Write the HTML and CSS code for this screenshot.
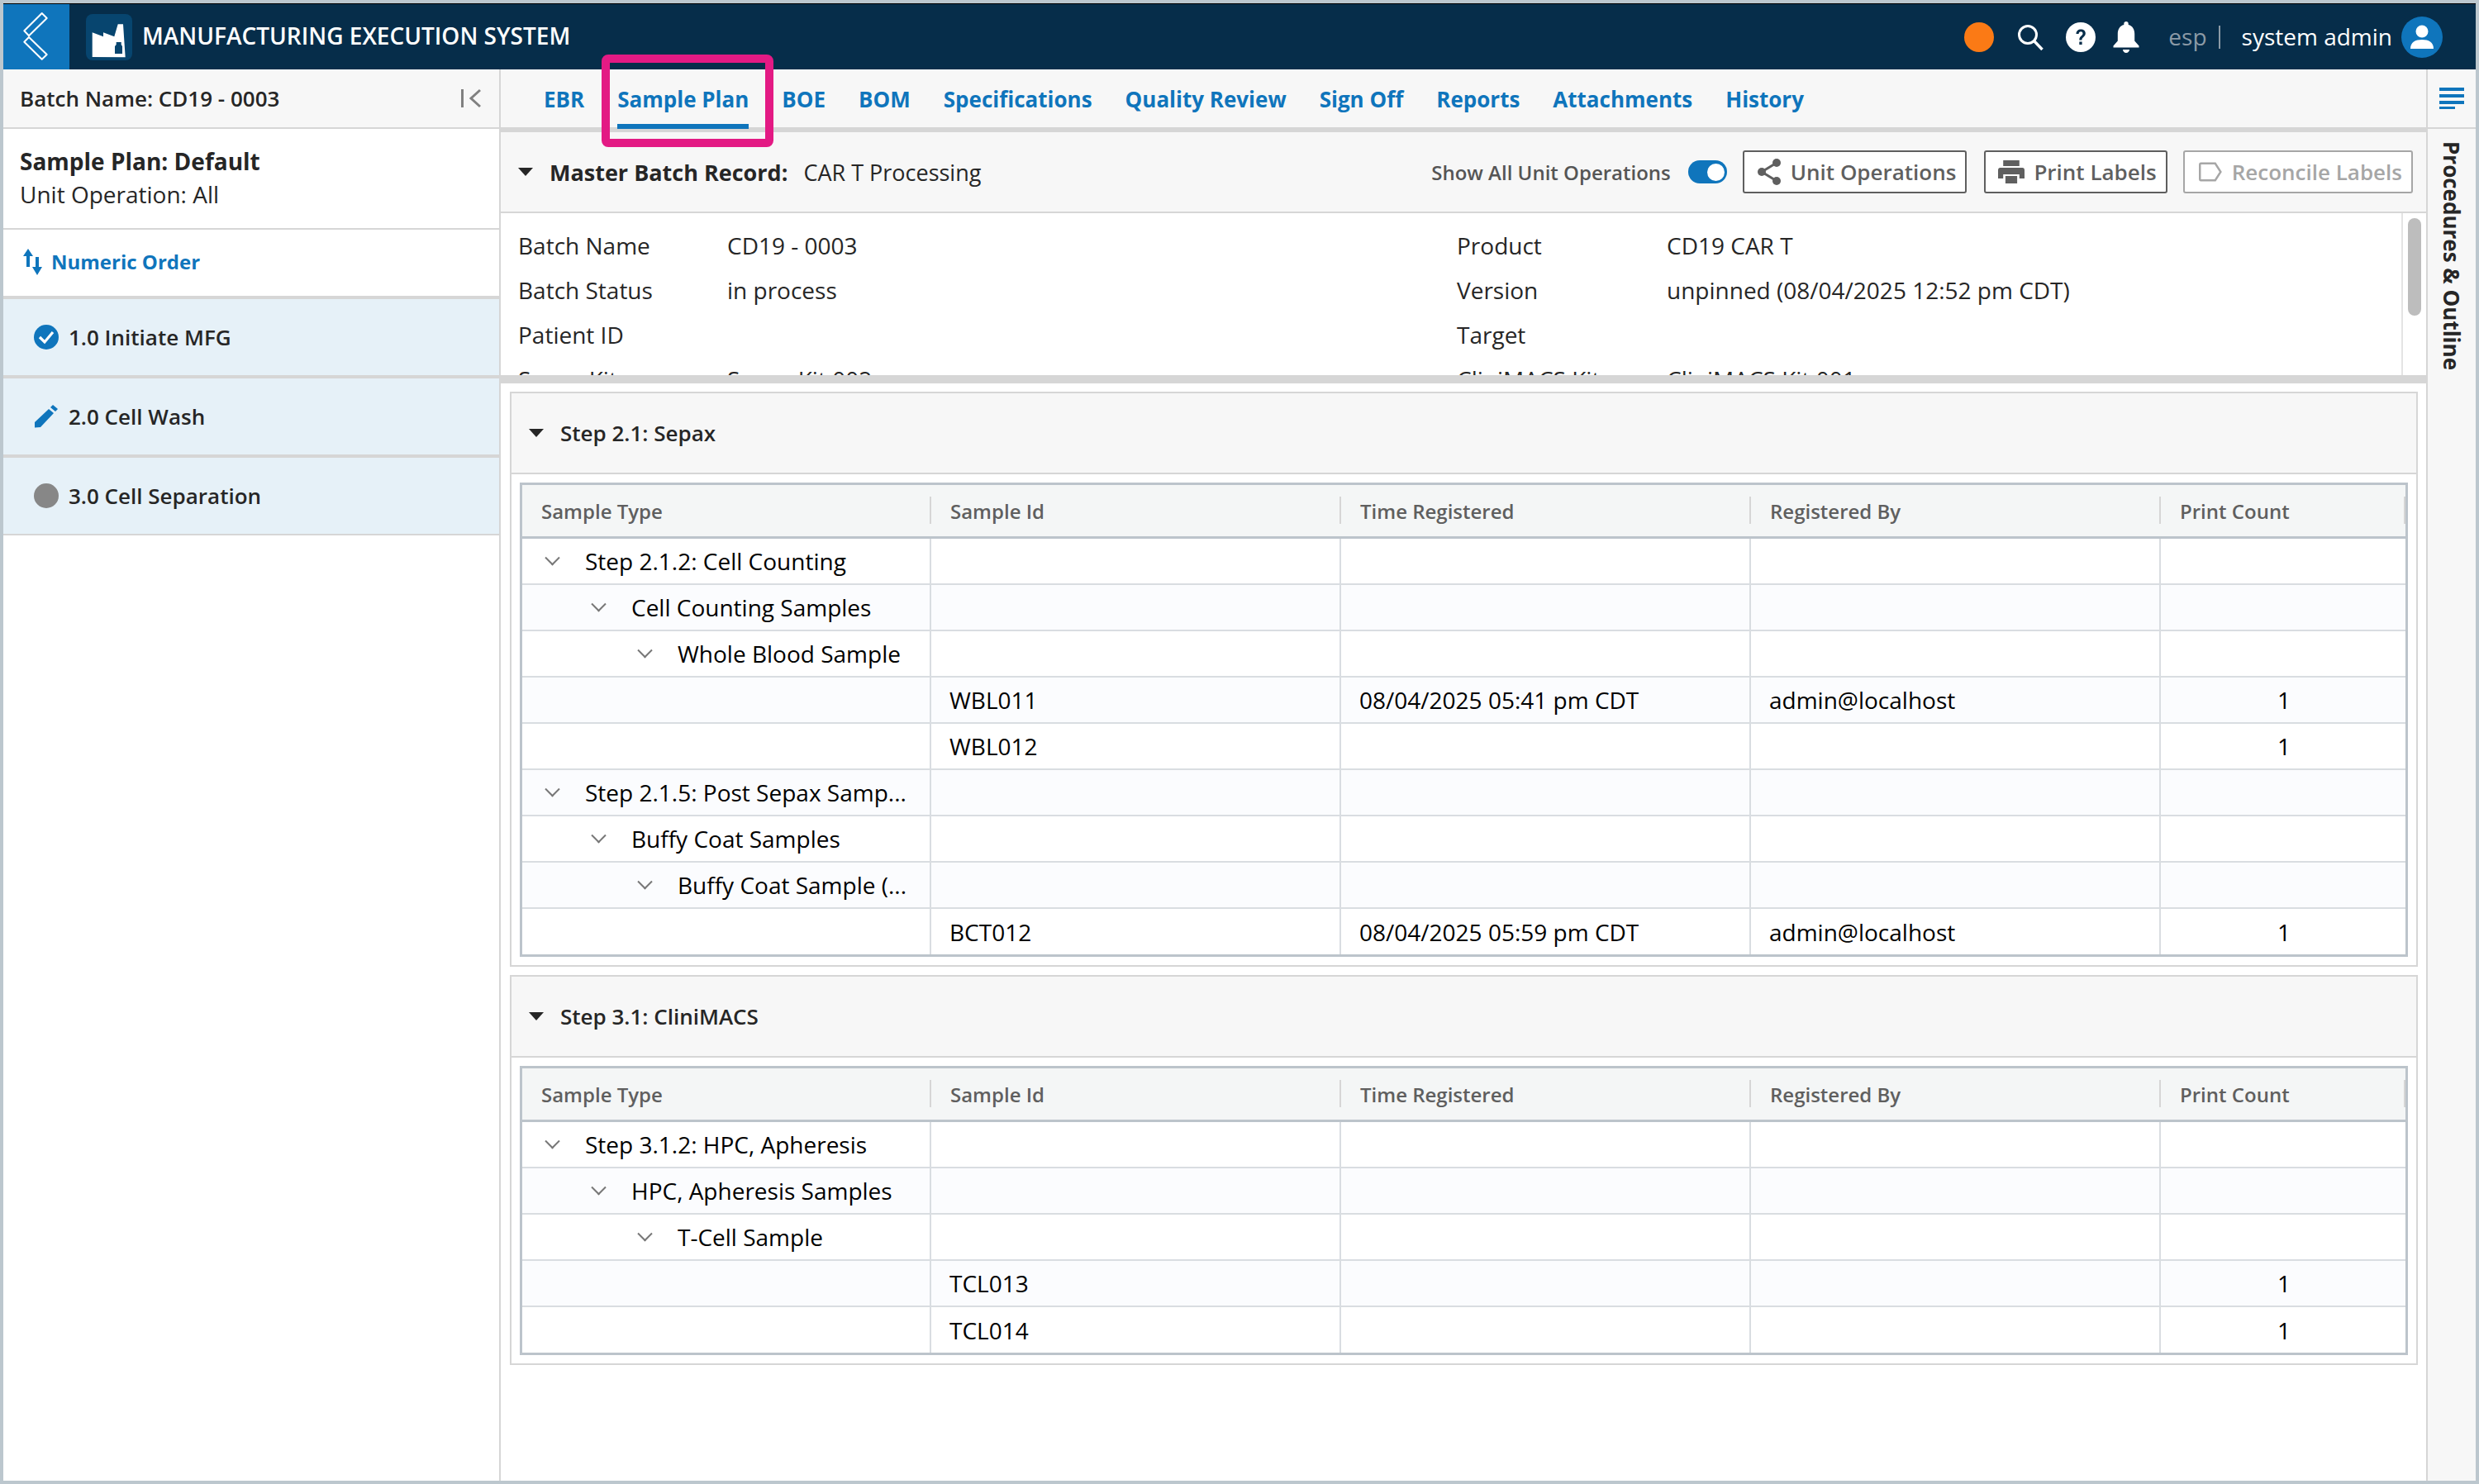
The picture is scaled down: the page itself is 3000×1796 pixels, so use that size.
FILE: index.html
```html
<!DOCTYPE html>
<html lang="en">
<head>
<meta charset="utf-8">
<title>Manufacturing Execution System</title>
<link rel="stylesheet" href="styles.css">
</head>
<body>
<div class="app">
  <header class="topbar">
    <a class="back"><svg width="80" height="79" viewBox="4 5 80 79"><path d="M29.300 37.300 L50.700 16 L56.700 22 L35 43.300 Z M29.300 50.700 L35 45 L56.700 66 L50.700 71.700 Z" fill="none" stroke="#fff" stroke-width="2" stroke-linejoin="round"/></svg></a>
    <div class="logo"><svg width="56" height="56" viewBox="0 0 56 56"><path d="M7.700 22.300 L21 27.300 V22.300 L34.300 27.300 L38.700 12.300 H45 L47.700 52.300 L7.700 52 Z" fill="#fff"/><path d="M36.700 34 h6 v3 l1.300 2 v9 h-9 v-9 l1.700 -2 Z" fill="#07456f"/></svg></div>
    <div class="app-title">MANUFACTURING EXECUTION SYSTEM</div>
    <div class="top-right">
      <span class="status-dot"></span>
      <svg class="ti-search" width="32" height="32" viewBox="0 0 32 32"><circle cx="13" cy="13" r="10.500" fill="none" stroke="#fff" stroke-width="3"/><path d="M20.500 20.500 L30.500 31" stroke="#fff" stroke-width="3.400"/></svg>
      <svg class="ti-help" width="36" height="36" viewBox="0 0 36 36"><circle cx="18" cy="18" r="18" fill="#fff"/><path d="M12.500 14c0-3.500 2.500-5.500 5.700-5.500 3.300 0 5.600 2 5.600 4.900 0 4.100-4.400 4.300-4.400 8.100h-3.100c0-5 4.200-5.100 4.200-8 0-1.400-1-2.300-2.400-2.300-1.500 0-2.400 1-2.500 2.800z" fill="#062d4a"/><rect x="16.300" y="23.500" width="3.300" height="3.500" fill="#062d4a"/></svg>
      <svg class="ti-bell" width="32" height="38" viewBox="0 0 32 38"><path d="M16 0c1.600 0 2.700 1.100 2.700 2.700v1.200c5 1.300 7.500 5.500 7.500 11v8.600l5.300 6v2H.5v-2l5.300-6v-8.600c0-5.500 2.500-9.700 7.500-11V2.700C13.300 1.100 14.400 0 16 0zM12 34h8c0 2.200-1.800 4-4 4s-4-1.800-4-4z" fill="#fff"/></svg>
      <span class="lang">esp</span><span class="lang-sep"></span>
      <span class="user">system admin</span>
      <span class="avatar"><svg width="30" height="32" viewBox="0 0 30 32"><circle cx="15" cy="9" r="7.500" fill="#fff"/><path d="M1 30c0-8 6-11 14-11s14 3 14 11z" fill="#fff"/></svg></span>
    </div>
  </header>

  <div class="workspace">
    <aside class="left">
      <div class="batch-row"><span>Batch Name: CD19 - 0003</span>
        <svg width="24" height="24" viewBox="0 0 24 24"><path d="M1.500 1v22" stroke="#808080" stroke-width="3"/><path d="M23 2 L12 12 L23 22" fill="none" stroke="#808080" stroke-width="3"/></svg>
      </div>
      <div class="plan"><div class="plan-name">Sample Plan: Default</div><div class="plan-unit">Unit Operation: All</div></div>
      <div class="order"><svg width="24" height="32" viewBox="0 0 24 32"><path d="M6 0 L12 9 H8 V22 H4 V9 H0 Z" fill="#0f75bc"/><path d="M17 32 L23 22 H19 V10 H15 V22 H11 Z" fill="#0f75bc"/></svg><span>Numeric Order</span></div>
      <div class="op"><svg width="30" height="30" viewBox="0 0 30 30"><circle cx="15" cy="15" r="15" fill="#0f75bc"/><path d="M7 15 L13 21 L23 9" fill="none" stroke="#fff" stroke-width="3.200"/></svg><span>1.0 Initiate MFG</span></div>
      <div class="op"><svg width="30" height="30" viewBox="0 0 30 30"><path d="M1 28.500 V22 L18 6 L24 11 L8 28 Z" fill="#0f75bc"/><path d="M20 4 L23 1 L29 6 L26 9 Z" fill="#0f75bc"/></svg><span>2.0 Cell Wash</span></div>
      <div class="op"><span class="grey-dot"></span><span>3.0 Cell Separation</span></div>
    </aside>

    <main class="main">
      <nav class="tabs">
        <a class="tab">EBR</a><a class="tab active">Sample Plan</a><a class="tab">BOE</a><a class="tab">BOM</a><a class="tab">Specifications</a><a class="tab">Quality Review</a><a class="tab">Sign Off</a><a class="tab">Reports</a><a class="tab">Attachments</a><a class="tab">History</a>
      </nav>
      <div class="mbr-head">
        <span class="caret"></span>
        <strong class="mbr-label">Master Batch Record:</strong><span class="mbr-val">CAR T Processing</span>
        <div class="mbr-tools">
          <span class="show-all">Show All Unit Operations</span>
          <span class="toggle"><span class="knob"></span></span>
          <button class="btn"><svg width="30" height="32" viewBox="0 0 30 32"><path d="M24 5 L6 16 L24 27" fill="none" stroke="#5f5f5f" stroke-width="3"/><circle cx="24" cy="5" r="5" fill="#5f5f5f"/><circle cx="6" cy="16" r="5" fill="#5f5f5f"/><circle cx="24" cy="27" r="5" fill="#5f5f5f"/></svg>Unit Operations</button>
          <button class="btn"><svg width="32" height="28" viewBox="0 0 36 28" preserveAspectRatio="none"><path d="M7 0 H29 V7 H7 Z M3 9 H33 Q36 9 36 12 V22 H29 V17 H7 V22 H0 V12 Q0 9 3 9 Z M10 19 H26 V28 H10 Z" fill="#5f5f5f"/></svg>Print Labels</button>
          <button class="btn off"><svg width="28" height="24" viewBox="0 0 34 28" preserveAspectRatio="none"><path d="M3 2 H24 L32 14 L24 26 H3 Q1.500 26 1.500 24 V4 Q1.500 2 3 2 Z" fill="none" stroke="#a6a6a6" stroke-width="3"/></svg>Reconcile Labels</button>
        </div>
      </div>
      <div class="details">
        <dl class="dgrid">
          <dt>Batch Name</dt><dd>CD19 - 0003</dd><dt>Product</dt><dd>CD19 CAR T</dd>
          <dt>Batch Status</dt><dd>in process</dd><dt>Version</dt><dd>unpinned (08/04/2025 12:52 pm CDT)</dd>
          <dt>Patient ID</dt><dd></dd><dt>Target</dt><dd></dd>
          <dt>Sepax Kit</dt><dd>Sepax Kit 002</dd><dt>CliniMACS Kit</dt><dd>CliniMACS Kit 001</dd>
        </dl>
        <div class="scroll"><span class="thumb"></span></div>
      </div>
      <div class="splitter"></div>

      <section class="card">
        <div class="card-head"><span class="caret"></span>Step 2.1: Sepax</div>
        <div class="grid">
          <div class="row head"><div>Sample Type</div><div>Sample Id</div><div>Time Registered</div><div>Registered By</div><div>Print Count</div></div>
          <div class="row"><div class="l1"><i class="chev"></i>Step 2.1.2: Cell Counting</div><div></div><div></div><div></div><div></div></div>
          <div class="row alt"><div class="l2"><i class="chev"></i>Cell Counting Samples</div><div></div><div></div><div></div><div></div></div>
          <div class="row"><div class="l3"><i class="chev"></i>Whole Blood Sample</div><div></div><div></div><div></div><div></div></div>
          <div class="row alt"><div></div><div>WBL011</div><div>08/04/2025 05:41 pm CDT</div><div>admin@localhost</div><div class="num">1</div></div>
          <div class="row"><div></div><div>WBL012</div><div></div><div></div><div class="num">1</div></div>
          <div class="row alt"><div class="l1"><i class="chev"></i>Step 2.1.5: Post Sepax Samp...</div><div></div><div></div><div></div><div></div></div>
          <div class="row"><div class="l2"><i class="chev"></i>Buffy Coat Samples</div><div></div><div></div><div></div><div></div></div>
          <div class="row alt"><div class="l3"><i class="chev"></i>Buffy Coat Sample (...</div><div></div><div></div><div></div><div></div></div>
          <div class="row last"><div></div><div>BCT012</div><div>08/04/2025 05:59 pm CDT</div><div>admin@localhost</div><div class="num">1</div></div>
        </div>
      </section>

      <section class="card">
        <div class="card-head"><span class="caret"></span>Step 3.1: CliniMACS</div>
        <div class="grid">
          <div class="row head"><div>Sample Type</div><div>Sample Id</div><div>Time Registered</div><div>Registered By</div><div>Print Count</div></div>
          <div class="row"><div class="l1"><i class="chev"></i>Step 3.1.2: HPC, Apheresis</div><div></div><div></div><div></div><div></div></div>
          <div class="row alt"><div class="l2"><i class="chev"></i>HPC, Apheresis Samples</div><div></div><div></div><div></div><div></div></div>
          <div class="row"><div class="l3"><i class="chev"></i>T-Cell Sample</div><div></div><div></div><div></div><div></div></div>
          <div class="row alt"><div></div><div>TCL013</div><div></div><div></div><div class="num">1</div></div>
          <div class="row last"><div></div><div>TCL014</div><div></div><div></div><div class="num">1</div></div>
        </div>
      </section>
    </main>

    <aside class="rail">
      <div class="rail-top"><svg width="30" height="26" viewBox="0 0 30 26"><path d="M0 0h30v4H0zM0 8h30v4H0zM0 16h30v4H0zM0 23h19v3.500H0z" fill="#0f75bc"/></svg></div>
      <div class="rail-label">Procedures &amp; Outline</div>
    </aside>
  </div>
  <div class="callout"></div>
</div>
</body>
</html>
```
FILE: styles.css
```css
* { box-sizing: border-box; }
html, body { margin: 0; padding: 0; background: #bcc7ce; }
body { font-family: "Open Sans", "Noto Sans", sans-serif; color: #262626; }
.app { position: relative; width: 3000px; height: 1796px; padding: 4px; display: flex; flex-direction: column; overflow: hidden; }

.topbar { height: 80px; flex: none; background: #062d4a; border-top: 1px solid #000; display: flex; align-items: center; color: #fff; }
.back { width: 80px; height: 79px; background: #0f75bc; display: flex; }
.logo { width: 56px; height: 56px; margin-left: 20px; background: #07456f; border-radius: 8px; display: flex; }
.app-title { margin: -3px 0 0 12px; font-size: 28px; font-weight: 600; white-space: nowrap; }
.top-right { margin-left: auto; display: flex; align-items: center; height: 100%; }
.status-dot { width: 36px; height: 36px; border-radius: 50%; background: #fb7a15; }
.ti-search { margin-left: 28px; }
.ti-help { margin-left: 27px; }
.ti-bell { margin-left: 21px; }
.lang { margin: -2px 0 0 35px; font-size: 28px; color: #8b9aa6; }
.lang-sep { width: 2px; height: 28px; background: #8b9aa6; margin-left: 14px; }
.user { margin: -2px 0 0 26px; font-size: 28px; color: #fff; }
.avatar { width: 50px; height: 50px; margin: 0 40px 0 11px; border-radius: 50%; background: #0f75bc; display: flex; align-items: center; justify-content: center; }

.workspace { flex: 1; display: flex; min-height: 0; background: #fff; }
.left { width: 602px; flex: none; border-right: 2px solid #d6d6d6; display: flex; flex-direction: column; }
.batch-row { height: 72px; flex: none; background: #f7f7f7; border-bottom: 2px solid #d6d6d6; display: flex; align-items: center; justify-content: space-between; padding: 0 22px 0 20px; font-size: 26px; font-weight: 600; }
.plan { height: 122px; flex: none; border-bottom: 2px solid #d6d6d6; padding: 19px 20px 0; }
.plan-name { font-size: 28px; font-weight: 700; line-height: 40px; }
.plan-unit { font-size: 28px; line-height: 41px; }
.order { height: 84px; flex: none; border-bottom: 4px solid #d6d6d6; display: flex; align-items: center; padding: 0 0 3px 24px; gap: 10px; color: #0f75bc; font-size: 24px; font-weight: 700; }
.op { height: 96px; flex: none; background: #e6f1f8; border-bottom: 4px solid #d6d6d6; display: flex; align-items: center; padding-left: 37px; gap: 12px; font-size: 26px; font-weight: 600; }
.op:last-child { height: 94px; border-bottom-width: 2px; }
.grey-dot { width: 30px; height: 30px; border-radius: 50%; background: #878787; }

.main { flex: 1; min-width: 0; display: flex; flex-direction: column; }
.tabs { height: 76px; flex: none; background: #f7f7f7; border-bottom: 6px solid #d6d6d6; display: flex; padding-left: 52px; gap: 40px; align-items: stretch; }
.tab { font-size: 26px; font-weight: 700; color: #0f75bc; display: flex; align-items: center; position: relative; padding-top: 1px; white-space: nowrap; }
.tab.active::after { content: ""; position: absolute; left: 0; right: 0; bottom: -2px; height: 6px; background: #0f75bc; }
.mbr-head { height: 98px; flex: none; background: #f7f7f7; border-bottom: 2px solid #d6d6d6; display: flex; align-items: center; padding-left: 21px; font-size: 27px; }
.caret { width: 0; height: 0; border-left: 9px solid transparent; border-right: 9px solid transparent; border-top: 10px solid #262626; flex: none; }
.mbr-label { margin-left: 20px; font-weight: 700; font-size: 27px; }
.mbr-val { margin-left: 19px; }
.mbr-tools { margin-left: auto; display: flex; align-items: center; margin-right: 16px; }
.show-all { font-size: 24px; font-weight: 600; color: #555; }
.toggle { width: 47px; height: 28px; border-radius: 14px; background: #0f75bc; margin: 0 -2px 0 21px; position: relative; }
.knob { position: absolute; right: 3px; top: 3.500px; width: 21px; height: 21px; border-radius: 50%; background: #fff; }
.btn { height: 52px; border: 2px solid #5f5f5f; border-radius: 3px; background: #fff; padding: 0 11px 0 15px; margin-left: 21px; display: flex; align-items: center; gap: 11px; font: 600 26px "Open Sans", sans-serif; color: #5f5f5f; }
.btn svg { flex: none; }
.btn.off { border-color: #a6a6a6; color: #a6a6a6; gap: 12px; padding-left: 17px; margin-left: 19px; }

.details { height: 196px; flex: none; position: relative; overflow: hidden; display: flex; }
.dgrid { flex: 1; margin: 0; padding: 12px 0 0 21px; display: grid; grid-template-columns: 253px 883px 254px 1fr; grid-auto-rows: 54px; align-items: center; font-size: 28px; }
.dgrid dt, .dgrid dd { margin: 0; white-space: nowrap; }
.scroll { width: 30px; flex: none; border-left: 2px solid #e4e4e4; padding: 6px 6px; }
.thumb { display: block; width: 16px; height: 118px; border-radius: 8px; background: #bdbdbd; }
.splitter { height: 10px; flex: none; background: #d6d6d6; }

.card { margin: 10px 10px 0 11px; border: 2px solid #d6d6d6; flex: none; padding-bottom: 10px; }
.card-head { height: 98px; background: #f7f7f7; border-bottom: 2px solid #d6d6d6; display: flex; align-items: center; padding-left: 21px; gap: 20px; font-size: 26px; font-weight: 600; }
.grid { margin: 10px 10px 0 10px; border: 3px solid #bcc4cb; }
.row { display: grid; grid-template-columns: 495px 496px 496px 496px 1fr; height: 56px; border-bottom: 2px solid #d9dde1; color: #000; }
.row.last { border-bottom: 0; height: 55px; }
.row > div { border-right: 2px solid #d9dde1; display: flex; align-items: center; padding-left: 22px; font-size: 28px; white-space: nowrap; }
.row > div:last-child { border-right: 0; }
.row.alt { background: #fbfcfe; }
.row.head { height: 65px; background: #f4f6f6; border-bottom: 3px solid #bcc4cb; color: #5f5f5f; }
.row.head > div { font-size: 24px; font-weight: 600; padding-left: 23px; position: relative; border-right: 0; }
.row.head > div::after { content: ""; position: absolute; right: 0; top: 14px; bottom: 15px; width: 2px; background: #d6d6d6; }
.row > .num { padding-left: 141px; }
.row > .l1 { padding-left: 30px; }
.row > .l2 { padding-left: 86px; }
.row > .l3 { padding-left: 142px; }
.chev { width: 13px; height: 13px; border-right: 2px solid #777; border-bottom: 2px solid #777; transform: rotate(45deg) translate(-3px, -3px); margin-right: 33px; flex: none; }

.rail { width: 60px; flex: none; border-left: 2px solid #d6d6d6; background: #f7f7f7; display: flex; flex-direction: column; }
.rail-top { height: 72px; flex: none; border-bottom: 2px solid #d6d6d6; display: flex; align-items: center; justify-content: center; }
.rail-label { writing-mode: vertical-rl; font-size: 26px; font-weight: 700; color: #262626; padding-top: 15px; align-self: center; white-space: nowrap; }

.callout { position: absolute; left: 728px; top: 66px; width: 208px; height: 112px; border: 10px solid #e31a84; border-radius: 8px; pointer-events: none; }
```
